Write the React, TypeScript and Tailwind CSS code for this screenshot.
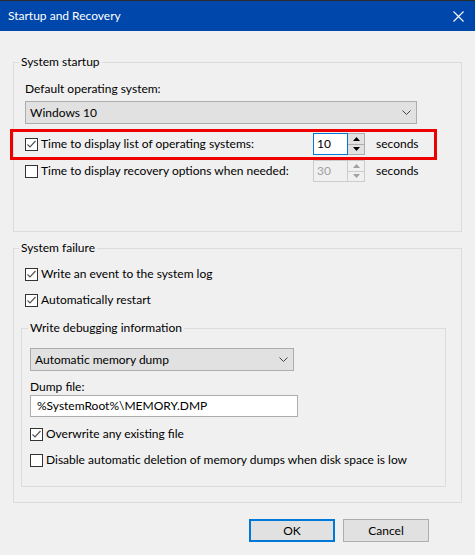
import React from 'react';

const FONT = { fontFamily: 'Lato, "Noto Sans", "Liberation Sans", sans-serif' };

const Check: React.FC<{ checked?: boolean }> = ({ checked }) => (
  <span className="w-[13px] h-[13px] border border-[#333333] bg-white flex items-center justify-center shrink-0">
    {checked && (
      <svg width="11" height="11" viewBox="0 0 11 11">
        <polyline points="1.5,5.5 4,8 9.5,2" fill="none" stroke="#555555" strokeWidth="1.2" />
      </svg>
    )}
  </span>
);

const CheckRow: React.FC<{ checked?: boolean; label: string; className?: string }> = ({ checked, label, className }) => (
  <div className={`flex items-center gap-[3px] h-[16px] ${className ?? ''}`}>
    <Check checked={checked} />
    <span className="whitespace-nowrap leading-[16px]">{label}</span>
  </div>
);

const Arrow: React.FC<{ up?: boolean; disabled?: boolean }> = ({ up, disabled }) => (
  <svg width="7" height="4" viewBox="0 0 7 4">
    <polygon points={up ? '0,4 3.5,0 7,4' : '0,0 3.5,4 7,0'} fill={disabled ? '#a0a0a0' : '#000000'} />
  </svg>
);

const Spinner: React.FC<{ value: string; disabled?: boolean; focused?: boolean }> = ({ value, disabled, focused }) => (
  <div className="flex h-[22px]">
    <div
      className={`w-[35px] h-full border flex items-center pl-[3px] ${
        focused ? 'border-[#0078d7] bg-white text-black' : disabled ? 'border-[#cccccc] bg-[#f0f0f0] text-[#a0a0a0]' : 'border-[#7a7a7a] bg-white'
      }`}
    >
      {value}
    </div>
    <div className={`w-[17px] h-full flex flex-col border border-l-0 ${disabled ? 'border-[#cccccc]' : 'border-[#adadad]'}`}>
      <div className={`flex-1 flex items-center justify-center border-b ${disabled ? 'border-[#cccccc] bg-[#f0f0f0]' : 'border-[#adadad] bg-[#e1e1e1]'}`}>
        <Arrow up disabled={disabled} />
      </div>
      <div className={`flex-1 flex items-center justify-center ${disabled ? 'bg-[#f0f0f0]' : 'bg-[#e1e1e1]'}`}>
        <Arrow disabled={disabled} />
      </div>
    </div>
  </div>
);

const Select: React.FC<{ value: string; className?: string }> = ({ value, className }) => (
  <div className={`h-[23px] border border-[#adadad] bg-[#e1e1e1] flex items-center justify-between pl-[4px] pr-[5px] ${className ?? ''}`}>
    <span>{value}</span>
    <svg width="9" height="5" viewBox="0 0 9 5">
      <polyline points="0.5,0.5 4.5,4.5 8.5,0.5" fill="none" stroke="#444444" strokeWidth="1" />
    </svg>
  </div>
);

export default function App() {
  return (
    <div
      className="w-[475px] h-[555px] bg-[#f0f0f0] text-[12px] text-black flex flex-col border-t border-[#2b2b2b] overflow-hidden"
      style={FONT}
    >
      <div className="h-[30px] bg-[#0047ab] flex items-center justify-between pl-[8px] pr-[11px] text-white shrink-0">
        <span className="text-[12px]">Startup and Recovery</span>
        <svg width="11" height="11" viewBox="0 0 11 11">
          <path d="M0.5 0.5 L10.5 10.5 M10.5 0.5 L0.5 10.5" stroke="#ffffff" strokeWidth="1.1" />
        </svg>
      </div>

      <div className="flex flex-col px-[13px] pt-[23px]">
        <fieldset className="border border-[#dcdcdc] h-[178px] px-[11px] m-0">
          <legend className="px-[2px] -ml-[6px] leading-[16px]">System startup</legend>
          <div className="mt-[11px] leading-[16px]">Default operating system:</div>
          <Select value="Windows 10" className="mt-[4px] w-[392px]" />
          <div className="flex items-center -ml-[15px] w-[427px] border-[3px] border-[#ee0000] pl-[12px] pt-[1px] pb-[2px] mt-[5px]">
            <CheckRow checked label="Time to display list of operating systems:" className="w-[288px]" />
            <Spinner value="10" focused />
            <span className="ml-[11px]">seconds</span>
          </div>
          <div className="flex items-center">
            <CheckRow label="Time to display recovery options when needed:" className="w-[288px]" />
            <Spinner value="30" disabled />
            <span className="ml-[11px]">seconds</span>
          </div>
        </fieldset>

        <fieldset className="border border-[#dcdcdc] h-[263px] pl-[7px] pr-[15px] mt-[8px] m-0">
          <legend className="px-[2px] -ml-[2px] leading-[16px]">System failure</legend>
          <CheckRow checked label="Write an event to the system log" className="ml-[4px] mt-[10px]" />
          <CheckRow checked label="Automatically restart" className="ml-[4px] mt-[10px]" />
          <fieldset className="border border-[#dcdcdc] h-[167px] px-[8px] mt-[12px]">
            <legend className="px-[2px] -ml-[2px] leading-[16px]">Write debugging information</legend>
            <Select value="Automatic memory dump" className="mt-[12px] w-[264px]" />
            <div className="mt-[8px] leading-[16px]">Dump file:</div>
            <div className="h-[22px] w-[268px] border border-[#adadad] bg-white flex items-center pl-[6px]">
              %SystemRoot%\MEMORY.DMP
            </div>
            <CheckRow checked label="Overwrite any existing file" className="mt-[9px]" />
            <CheckRow label="Disable automatic deletion of memory dumps when disk space is low" className="mt-[10px]" />
          </fieldset>
        </fieldset>

        <div className="flex justify-end gap-[8px] mt-[16px] pr-[33px]">
          <button className="w-[86px] h-[23px] border-2 border-[#0078d7] bg-[#e1e1e1]">OK</button>
          <button className="w-[86px] h-[23px] border border-[#adadad] bg-[#e1e1e1]">Cancel</button>
        </div>
      </div>
    </div>
  );
}
